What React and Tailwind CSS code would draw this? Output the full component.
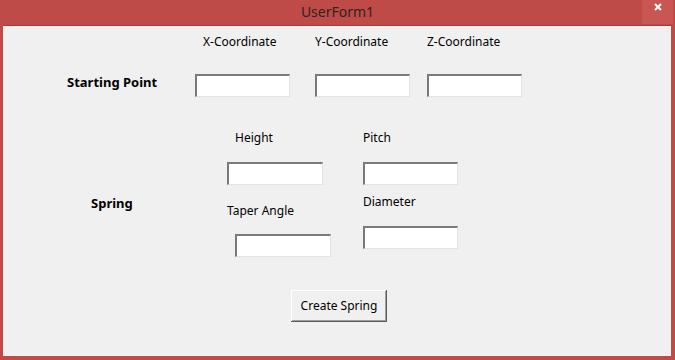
import React from 'react';

const font = { fontFamily: '"Noto Sans", "DejaVu Sans", sans-serif' };

function TextBox({ className = "" }) {
    return (
        <input
            type="text"
            className={`block w-[95px] h-[23px] bg-white outline-none border-t-2 border-l-2 border-r border-b border-t-[#7a7a7a] border-l-[#7a7a7a] border-r-[#e3e3e3] border-b-[#e3e3e3] ${className}`}
        />
    );
}

function Label({ children, className = "" }) {
    return <div className={`h-4 leading-4 text-[12px] text-black whitespace-nowrap ${className}`}>{children}</div>;
}

export default function App() {
    return (
        <div className="w-[675px] h-[360px] flex flex-col bg-[#be4b48]" style={font}>
            {/* title bar */}
            <div className="relative h-[25px] flex items-center justify-center">
                <span className="text-[14px] text-[#2e2222] leading-none -mt-[1px]">UserForm1</span>
                <div className="absolute right-[2px] top-0 w-[31px] h-[24px] bg-[#c85652] flex justify-center pt-[3px]">
                    <svg width="8" height="8" viewBox="0 0 8 8">
                        <path d="M1 1 L7 7 M7 1 L1 7" stroke="#fff" strokeWidth="2" />
                    </svg>
                </div>
            </div>

            {/* client area */}
            <div className="flex-1 ml-[3px] mr-[4px] mb-[4px] bg-[#f0f0f0] border-t border-[#9e3e3b]">

                {/* Starting point */}
                <div className="flex pt-[8px]">
                    <div className="w-[192px] pt-[40px] pl-[64px]">
                        <Label className="font-bold text-[13px]">Starting Point</Label>
                    </div>
                    <div className="w-[120px]">
                        <Label className="ml-[8px]">X-Coordinate</Label>
                        <TextBox className="mt-[24px]" />
                    </div>
                    <div className="w-[112px]">
                        <Label>Y-Coordinate</Label>
                        <TextBox className="mt-[24px]" />
                    </div>
                    <div>
                        <Label>Z-Coordinate</Label>
                        <TextBox className="mt-[24px]" />
                    </div>
                </div>

                {/* Spring */}
                <div className="flex mt-[33px]">
                    <div className="w-[224px] pt-[65px] pl-[88px]">
                        <Label className="font-bold text-[13px]">Spring</Label>
                    </div>
                    <div className="w-[136px]">
                        <Label className="ml-[8px]">Height</Label>
                        <TextBox className="mt-[16px] w-[96px]" />
                        <Label className="mt-[18px]">Taper Angle</Label>
                        <TextBox className="mt-[15px] ml-[8px] w-[96px]" />
                    </div>
                    <div>
                        <Label>Pitch</Label>
                        <TextBox className="mt-[16px]" />
                        <Label className="mt-[9px]">Diameter</Label>
                        <TextBox className="mt-[16px]" />
                    </div>
                </div>

                <div className="mt-[33px] ml-[288px]">
                    <button className="w-[96px] h-[32px] bg-[#f0f0f0] text-[12px] text-black shadow-[inset_-1px_-1px_#5a5a5a,inset_1px_1px_#ffffff,inset_-2px_-2px_#a0a0a0]">
                        Create Spring
                    </button>
                </div>
            </div>
        </div>
    );
}
